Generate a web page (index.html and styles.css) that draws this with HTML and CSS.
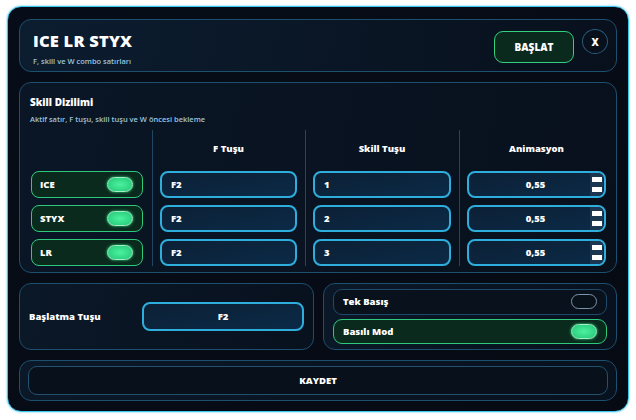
FILE: index.html
```html
<!DOCTYPE html>
<html lang="tr">
<head>
    <meta charset="UTF-8">
    <title>ICE LR STYX</title>
    <link rel="stylesheet" href="styles.css">
</head>
<body>
    <div class="window">
        <header class="card head">
            <div>
                <h1>ICE LR STYX</h1>
                <p class="sub">F, skill ve W combo satırları</p>
            </div>
            <div class="head-actions">
                <button class="btn-start">BAŞLAT</button>
                <button class="btn-close">X</button>
            </div>
        </header>

        <section class="card skills">
            <h2>Skill Dizilimi</h2>
            <p class="sub">Aktif satır, F tuşu, skill tuşu ve W öncesi bekleme</p>
            <div class="grid">
                <div class="col first">
                    <div class="col-head"></div>
                    <div class="toggle-row on"><span>ICE</span><i class="pill"></i></div>
                    <div class="toggle-row on"><span>STYX</span><i class="pill"></i></div>
                    <div class="toggle-row on"><span>LR</span><i class="pill"></i></div>
                </div>
                <div class="col">
                    <div class="col-head">F Tuşu</div>
                    <div class="field">F2</div>
                    <div class="field">F2</div>
                    <div class="field">F2</div>
                </div>
                <div class="col">
                    <div class="col-head">Skill Tuşu</div>
                    <div class="field">1</div>
                    <div class="field">2</div>
                    <div class="field">3</div>
                </div>
                <div class="col last">
                    <div class="col-head">Animasyon</div>
                    <div class="field num"><span>0,55</span><b class="spin"><i></i><i></i></b></div>
                    <div class="field num"><span>0,55</span><b class="spin"><i></i><i></i></b></div>
                    <div class="field num"><span>0,55</span><b class="spin"><i></i><i></i></b></div>
                </div>
            </div>
        </section>

        <div class="bottom">
            <section class="card hotkey">
                <span class="label">Başlatma Tuşu</span>
                <div class="field center">F2</div>
            </section>
            <section class="card modes">
                <div class="toggle-row mode"><span>Tek Basış</span><i class="pill"></i></div>
                <div class="toggle-row mode on"><span>Basılı Mod</span><i class="pill"></i></div>
            </section>
        </div>

        <section class="card save">
            <button class="btn-save">KAYDET</button>
        </section>
    </div>
</body>
</html>
```

FILE: styles.css
```css
* {
    box-sizing: border-box;
}
body {
    margin: 0;
    padding: 6px 7px;
    background-color: #ffffff;
    font-family: "Open Sans", "Noto Sans", sans-serif;
    color: #ffffff;
}
.window {
    width: 622px;
    height: 406px;
    border: 1px solid #3cc6ee;
    border-radius: 14px;
    background: linear-gradient(135deg, #070d18, #060a13);
    padding: 12px 11px 10px;
    display: flex;
    flex-direction: column;
    gap: 10px;
    box-shadow: 0 0 2px #3cc6ee;
}
.card {
    flex: none;
    border: 1px solid #1d4f6e;
    border-radius: 12px;
    background: linear-gradient(100deg, #0b1828, #08111e);
}
.sub {
    margin: 0;
    font-size: 7.5px;
    font-weight: 600;
    color: #9cc3dc;
}

/* header */
.head {
    height: 53px;
    display: flex;
    justify-content: space-between;
    align-items: flex-start;
    padding: 9px 8px 0 13px;
    background: linear-gradient(100deg, #0c1d30, #08101c);
}
h1 {
    margin: 0 0 4px;
    font-size: 16.5px;
    font-weight: 800;
    letter-spacing: 0.2px;
}
.head-actions {
    display: flex;
    align-items: flex-start;
    gap: 8px;
}
button {
    font-family: inherit;
    color: #ffffff;
    cursor: pointer;
}
.btn-start {
    width: 80px;
    height: 32px;
    margin-top: 2px;
    border: 1px solid #33d07f;
    border-radius: 9px;
    background-color: #0b2a1e;
    font-size: 10px;
    font-weight: 800;
}
.btn-close {
    width: 26px;
    height: 25px;
    padding: 0;
    border: 1px solid #2a5a7c;
    border-radius: 50%;
    background-color: #08101c;
    font-size: 10px;
    font-weight: 800;
}

/* skill grid */
.skills {
    height: 191px;
    padding: 10px 10px 0 10px;
    background: linear-gradient(100deg, #0a1626, #08101c);
}
h2 {
    margin: 2px 0 5px;
    font-size: 10px;
    font-weight: 800;
}
.grid {
    display: grid;
    grid-template-columns: 122px 153px 154px 1fr;
    margin-top: 6px;
}
.col {
    display: flex;
    flex-direction: column;
    gap: 7px;
    padding: 0 8px 0 7px;
    border-left: 1px solid #1f4662;
}
.col.first {
    border-left: none;
    padding: 0 9px 0 1px;
}
.col.last {
    padding-right: 0;
}
.col-head {
    height: 34px;
    display: flex;
    align-items: center;
    justify-content: center;
    padding-top: 2px;
    font-size: 9.5px;
    font-weight: 800;
}
.field {
    height: 27px;
    display: flex;
    align-items: center;
    padding-left: 9px;
    border: 2px solid #2eaedc;
    border-radius: 8px;
    background: linear-gradient(170deg, #0c2035, #0b2a47);
    font-size: 9.5px;
    font-weight: 800;
}
.field.center {
    justify-content: center;
    padding-left: 0;
}
.field.num {
    padding-left: 0;
    overflow: hidden;
}
.field.num span {
    flex: 1;
    text-align: center;
    padding-left: 12px;
}
.spin {
    width: 13px;
    height: 100%;
    display: flex;
    flex-direction: column;
    justify-content: space-evenly;
    align-items: center;
    margin-right: 1px;
    background-color: #1b3650;
}
.spin i {
    width: 10px;
    height: 5px;
    background-color: #ffffff;
}

/* toggles */
.toggle-row {
    height: 27px;
    display: flex;
    align-items: center;
    justify-content: space-between;
    padding: 0 9px 0 8px;
    border: 1px solid #1f4a6a;
    border-radius: 8px;
    background-color: #09111d;
    font-size: 9.5px;
    font-weight: 800;
}
.toggle-row.on {
    border-color: #2fc97c;
    background-color: #0a2a1d;
}
.pill {
    width: 26px;
    height: 15px;
    border: 1px solid #7d93a8;
    border-radius: 8px;
    background-color: #08101a;
}
.toggle-row.on .pill {
    border-color: #a4f0c6;
    background: radial-gradient(ellipse at center, #4cf0a0, #22c774);
    box-shadow: 0 0 3px #2fe08a;
}

/* bottom row */
.bottom {
    flex: none;
    display: grid;
    grid-template-columns: 295px 1fr;
    gap: 9px;
}
.hotkey {
    height: 67px;
    display: flex;
    align-items: center;
    justify-content: space-between;
    padding: 0 9px;
}
.label {
    font-size: 9.5px;
    font-weight: 800;
}
.hotkey .field {
    width: 162px;
    height: 29px;
}
.modes {
    height: 67px;
    display: flex;
    flex-direction: column;
    gap: 4px;
    padding: 5px 9px;
}
.modes .toggle-row {
    height: 26px;
    padding-left: 9px;
    padding-right: 9px;
    border-radius: 9px;
}

/* save */
.save {
    height: 41px;
    padding: 5px 8px;
}
.btn-save {
    width: 100%;
    height: 29px;
    border: 1px solid #23506e;
    border-radius: 9px;
    background-color: #08101b;
    font-size: 9.5px;
    font-weight: 800;
}
```
